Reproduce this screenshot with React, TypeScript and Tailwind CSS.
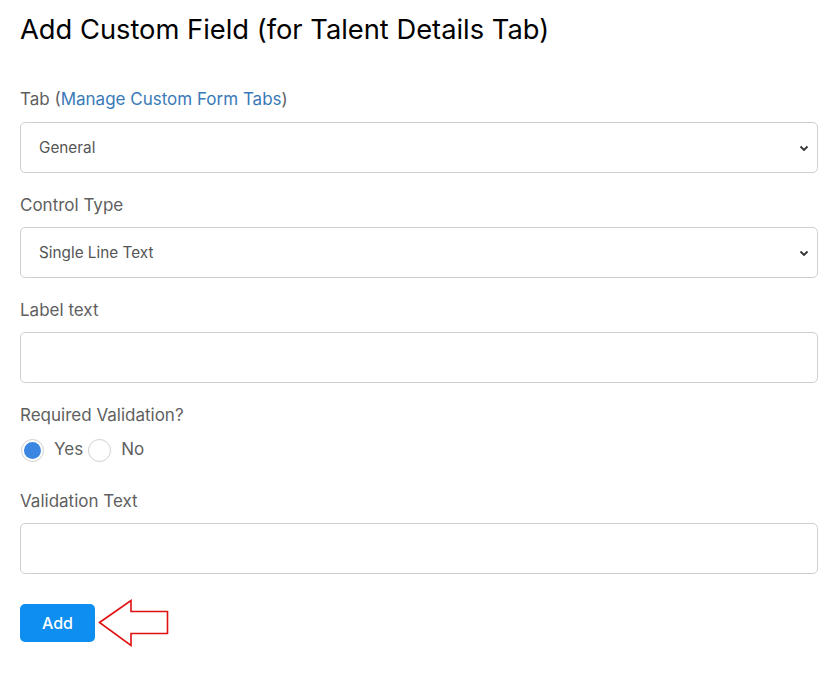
import * as React from 'react';

function Chevron() {
  return (
    <svg
      className="pointer-events-none absolute right-[8px] top-1/2 -translate-y-1/2"
      width="10"
      height="10"
      viewBox="0 0 10 10"
    >
      <path d="M1.5 3.5 L5 7 L8.5 3.5" fill="none" stroke="#333" strokeWidth="1.8" />
    </svg>
  );
}

function Select({ value }: { value: string }) {
  return (
    <div className="relative h-[51px] w-[798px] rounded-[5px] border border-[#cfcfcf] bg-white">
      <div className="flex h-full items-center pl-[18px] pt-[2px] text-[15.3px] text-[#555]">{value}</div>
      <Chevron />
    </div>
  );
}

function TextBox() {
  return <div className="h-[51px] w-[798px] rounded-[5px] border border-[#cfcfcf] bg-white" />;
}

function Label({ children, first }: { children: React.ReactNode; first?: boolean }) {
  return (
    <div className={(first ? 'mb-[11px]' : 'mb-[10px]') + ' h-[24px] text-[17px] leading-[24px] text-[#5f5f5f]'}>
      {children}
    </div>
  );
}

export default function App() {
  return (
    <div className="min-h-[692px] w-[838px] bg-white px-[20px] font-['Inter',sans-serif]">
      {/* Title */}
      <h1 className="pt-[13px] text-[27.3px] leading-[34px] font-normal text-black">
        Add Custom Field (for Talent Details Tab)
      </h1>

      <div className="mt-[40px]">
        <Label first>
          Tab (<span className="text-[#3a7ab8]">Manage Custom Form Tabs</span>)
        </Label>
        <Select value="General" />
      </div>

      <div className="mt-[20px]">
        <Label>Control Type</Label>
        <Select value="Single Line Text" />
      </div>

      <div className="mt-[20px]">
        <Label>Label text</Label>
        <TextBox />
      </div>

      <div className="mt-[20px]">
        <Label>Required Validation?</Label>
        <div className="mt-[2px] flex h-[26px] items-center text-[17px] text-[#5f5f5f]">
          <span className="ml-[1px] flex h-[23px] w-[23px] items-center justify-center rounded-full border border-[#d0d0d0]">
            <span className="h-[17px] w-[17px] rounded-full bg-[#3b86e0]" />
          </span>
          <span className="ml-[10px]">Yes</span>
          <span className="ml-[5px] h-[23px] w-[23px] rounded-full border border-[#d0d0d0]" />
          <span className="ml-[10px]">No</span>
        </div>
      </div>

      <div className="mt-[26px]">
        <Label>Validation Text</Label>
        <TextBox />
      </div>

      {/* Submit */}
      <div className="mt-[30px] flex items-start">
        <button className="h-[38px] w-[75px] rounded-[5px] bg-[#0d8ef0] text-[16px] font-medium text-white">
          Add
        </button>
        <svg className="-mt-[5px] ml-[3px]" width="72" height="50" viewBox="0 0 72 50">
          <path
            d="M1.5 23.5 L33 1.5 L33 12.5 L69.5 12.5 L69.5 34.5 L33 34.5 L33 46.5 Z"
            fill="white"
            stroke="#e01010"
            strokeWidth="1.6"
          />
        </svg>
      </div>
    </div>
  );
}
